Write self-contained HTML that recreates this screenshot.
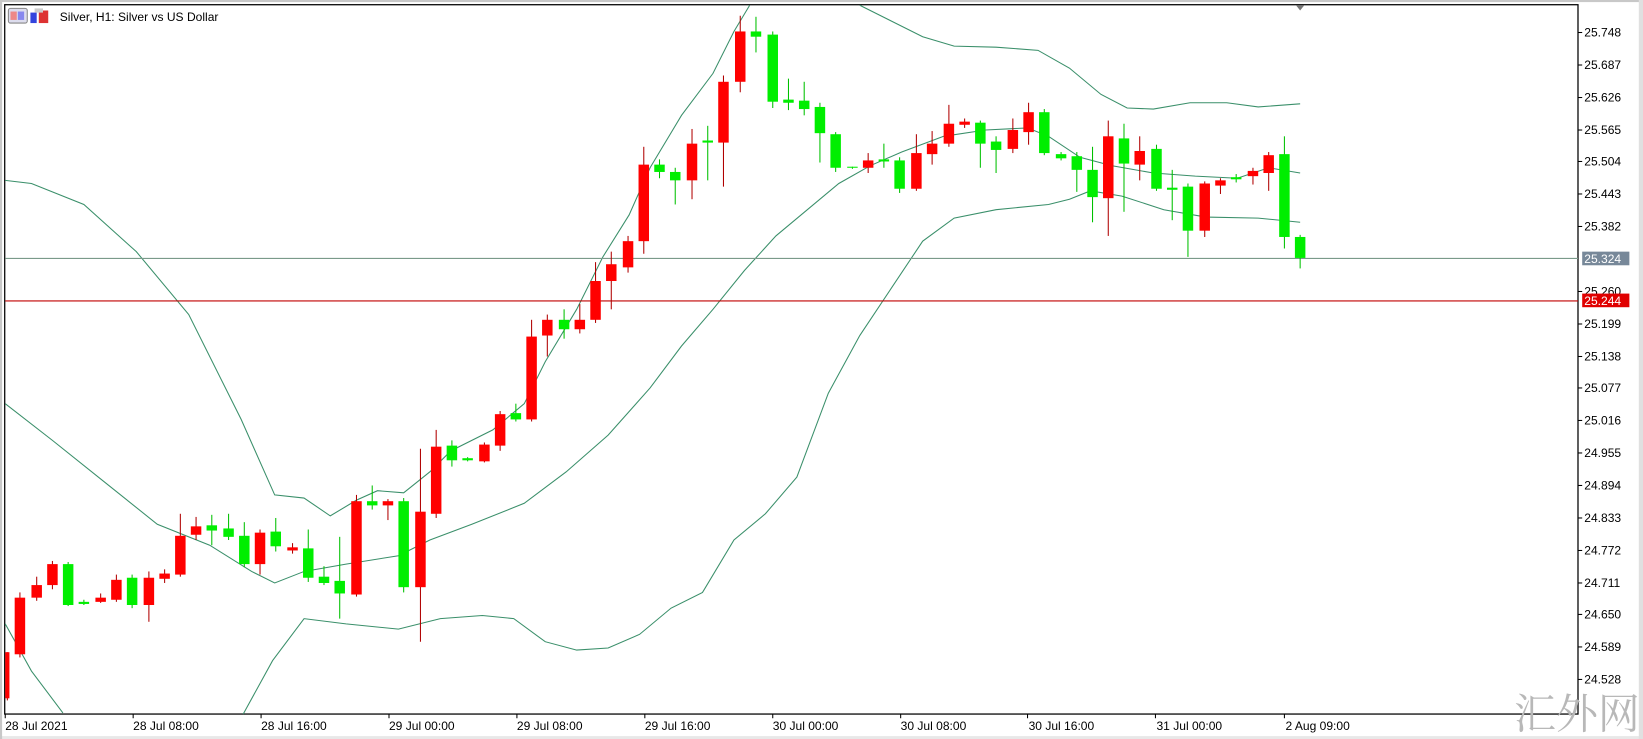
<!DOCTYPE html>
<html><head><meta charset="utf-8"><style>
html,body{margin:0;padding:0;background:#fff;overflow:hidden}
svg{display:block}
text{font-family:"Liberation Sans",sans-serif;font-size:11.5px;fill:#000}
.r rect{fill:#ff0000}.r line{stroke:#b00000}
.g rect{fill:#00ee00}.g line{stroke:#00c000}
line{stroke-width:1}
</style></head><body>
<svg width="1643" height="739" viewBox="0 0 1567 704.8" preserveAspectRatio="none">
<rect x="0" y="0" width="1567" height="704.8" fill="#fff"/>
<rect x="0" y="0" width="1567" height="2" fill="#c8c8c8"/>
<rect x="0" y="702" width="1567" height="3" fill="#e8e8e8"/>
<rect x="1563" y="0" width="4" height="705" fill="#e0e0e0"/>
<rect x="0" y="0" width="2" height="705" fill="#c8c8c8"/>
<rect x="4.5" y="4.5" width="1500.5" height="676.5" fill="none" stroke="#000" stroke-width="1.2"/>
<!-- header icons -->
<rect x="8" y="8" width="18" height="14" rx="2" fill="#dde" stroke="#888"/>
<rect x="10" y="11" width="6" height="8" fill="#e88"/><rect x="17" y="11" width="6" height="8" fill="#88e"/>
<path d="M29 12h6v10h-6z" fill="#3344dd"/><path d="M37 10h9v12h-9z" fill="#dd3333"/><path d="M33 8h8v4h-8z" fill="#ccc"/>
<text x="57" y="20">Silver, H1:  Silver vs US Dollar</text>
<path d="M1236 5 L1244 5 L1240 10 Z" fill="#777"/>
<!-- bands -->
<g fill="none" stroke="#3a8f6a" stroke-width="1">
<polyline points="5,172 30,175 80,195 130,240 180,300 230,400 262,472 290,475 315,492 340,477 360,468 385,470 410,450 430,430 470,410 500,385 520,345 550,295 575,245 600,205 620,160 650,110 680,70 700,30 715,5"/>
<polyline points="820,5 850,20 880,35 910,44 950,45 990,48 1020,65 1050,90 1075,103 1100,104 1135,98 1170,98 1200,102 1240,99"/>
<polyline points="5,385 50,420 100,460 150,500 200,520 240,545 262,556 290,545 330,538 380,530 410,515 450,500 500,480 540,450 580,415 620,370 650,330 680,295 710,258 740,225 770,200 800,175 830,158 860,145 900,130 940,124 980,122 1000,130 1030,150 1060,158 1100,165 1140,168 1180,170 1210,160 1240,165"/>
<polyline points="5,595 30,640 60,680"/>
<polyline points="232,681 260,630 290,590 330,595 380,600 420,590 460,587 490,590 520,612 550,620 580,618 610,605 640,580 670,565 700,515 730,490 760,455 790,375 820,320 850,275 880,230 910,208 950,200 1000,195 1020,190 1040,182 1070,187 1110,200 1150,207 1200,208 1240,212"/>
</g>
<!-- horizontal lines -->
<line x1="5" y1="246.5" x2="1505" y2="246.5" stroke="#7a9a8a"/>
<line x1="5" y1="287" x2="1505" y2="287" stroke="#c00000"/>
<!-- candles -->
<g class="r"><line x1="7" y1="622" x2="7" y2="668"/><rect x="5" y="622" width="4" height="44"/></g>
<g class="r"><line x1="19" y1="565" x2="19" y2="627"/><rect x="14" y="570" width="10" height="54"/></g>
<g class="r"><line x1="35" y1="550" x2="35" y2="573"/><rect x="30" y="558" width="10" height="12"/></g>
<g class="r"><line x1="50" y1="535" x2="50" y2="562"/><rect x="45" y="538" width="10" height="20"/></g>
<g class="g"><line x1="65" y1="536" x2="65" y2="578"/><rect x="60" y="538" width="10" height="39"/></g>
<g class="g"><line x1="80" y1="572" x2="80" y2="577"/><rect x="75" y="574" width="10" height="2"/></g>
<g class="r"><line x1="96" y1="566" x2="96" y2="575"/><rect x="91" y="570" width="10" height="4"/></g>
<g class="r"><line x1="111" y1="548" x2="111" y2="574"/><rect x="106" y="553" width="10" height="19"/></g>
<g class="g"><line x1="126" y1="548" x2="126" y2="580"/><rect x="121" y="551" width="10" height="26"/></g>
<g class="r"><line x1="142" y1="545" x2="142" y2="593"/><rect x="137" y="551" width="10" height="26"/></g>
<g class="r"><line x1="157" y1="543" x2="157" y2="556"/><rect x="152" y="547" width="10" height="5"/></g>
<g class="r"><line x1="172" y1="490" x2="172" y2="550"/><rect x="167" y="511" width="10" height="37"/></g>
<g class="r"><line x1="187" y1="493" x2="187" y2="515"/><rect x="182" y="502" width="10" height="8"/></g>
<g class="g"><line x1="202" y1="491" x2="202" y2="520"/><rect x="197" y="501" width="10" height="5"/></g>
<g class="g"><line x1="218" y1="490" x2="218" y2="515"/><rect x="213" y="504" width="10" height="8"/></g>
<g class="g"><line x1="233" y1="498" x2="233" y2="541"/><rect x="228" y="511" width="10" height="27"/></g>
<g class="r"><line x1="248" y1="505" x2="248" y2="548"/><rect x="243" y="508" width="10" height="30"/></g>
<g class="g"><line x1="263" y1="494" x2="263" y2="526"/><rect x="258" y="507" width="10" height="14"/></g>
<g class="r"><line x1="279" y1="518" x2="279" y2="528"/><rect x="274" y="522" width="10" height="3"/></g>
<g class="g"><line x1="294" y1="505" x2="294" y2="555"/><rect x="289" y="523" width="10" height="28"/></g>
<g class="g"><line x1="309" y1="540" x2="309" y2="558"/><rect x="304" y="550" width="10" height="6"/></g>
<g class="g"><line x1="324" y1="512" x2="324" y2="590"/><rect x="319" y="554" width="10" height="12"/></g>
<g class="r"><line x1="340" y1="472" x2="340" y2="569"/><rect x="335" y="478" width="10" height="89"/></g>
<g class="g"><line x1="355" y1="463" x2="355" y2="486"/><rect x="350" y="478" width="10" height="4"/></g>
<g class="r"><line x1="370" y1="476" x2="370" y2="496"/><rect x="365" y="478" width="10" height="4"/></g>
<g class="g"><line x1="385" y1="475" x2="385" y2="565"/><rect x="380" y="478" width="10" height="82"/></g>
<g class="r"><line x1="401" y1="428" x2="401" y2="612"/><rect x="396" y="488" width="10" height="72"/></g>
<g class="r"><line x1="416" y1="410" x2="416" y2="494"/><rect x="411" y="426" width="10" height="64"/></g>
<g class="g"><line x1="431" y1="420" x2="431" y2="445"/><rect x="426" y="425" width="10" height="14"/></g>
<g class="g"><line x1="446" y1="436" x2="446" y2="440"/><rect x="441" y="437" width="10" height="2"/></g>
<g class="r"><line x1="462" y1="422" x2="462" y2="441"/><rect x="457" y="424" width="10" height="16"/></g>
<g class="r"><line x1="477" y1="392" x2="477" y2="430"/><rect x="472" y="395" width="10" height="30"/></g>
<g class="g"><line x1="492" y1="385" x2="492" y2="402"/><rect x="487" y="394" width="10" height="6"/></g>
<g class="r"><line x1="507" y1="305" x2="507" y2="402"/><rect x="502" y="321" width="10" height="79"/></g>
<g class="r"><line x1="522" y1="300" x2="522" y2="340"/><rect x="517" y="305" width="10" height="15"/></g>
<g class="g"><line x1="538" y1="295" x2="538" y2="323"/><rect x="533" y="305" width="10" height="9"/></g>
<g class="r"><line x1="553" y1="290" x2="553" y2="318"/><rect x="548" y="305" width="10" height="9"/></g>
<g class="r"><line x1="568" y1="250" x2="568" y2="308"/><rect x="563" y="268" width="10" height="37"/></g>
<g class="r"><line x1="583" y1="240" x2="583" y2="295"/><rect x="578" y="252" width="10" height="16"/></g>
<g class="r"><line x1="599" y1="225" x2="599" y2="260"/><rect x="594" y="230" width="10" height="25"/></g>
<g class="r"><line x1="614" y1="140" x2="614" y2="242"/><rect x="609" y="157" width="10" height="73"/></g>
<g class="g"><line x1="629" y1="152" x2="629" y2="170"/><rect x="624" y="157" width="10" height="7"/></g>
<g class="g"><line x1="644" y1="160" x2="644" y2="195"/><rect x="639" y="164" width="10" height="8"/></g>
<g class="r"><line x1="660" y1="123" x2="660" y2="190"/><rect x="655" y="137" width="10" height="35"/></g>
<g class="g"><line x1="675" y1="120" x2="675" y2="172"/><rect x="670" y="134" width="10" height="2"/></g>
<g class="r"><line x1="690" y1="72" x2="690" y2="178"/><rect x="685" y="78" width="10" height="58"/></g>
<g class="r"><line x1="706" y1="15" x2="706" y2="88"/><rect x="701" y="30" width="10" height="48"/></g>
<g class="g"><line x1="721" y1="16" x2="721" y2="50"/><rect x="716" y="30" width="10" height="5"/></g>
<g class="g"><line x1="737" y1="30" x2="737" y2="103"/><rect x="732" y="33" width="10" height="64"/></g>
<g class="g"><line x1="752" y1="75" x2="752" y2="105"/><rect x="747" y="95" width="10" height="3"/></g>
<g class="g"><line x1="767" y1="78" x2="767" y2="110"/><rect x="762" y="96" width="10" height="8"/></g>
<g class="g"><line x1="782" y1="98" x2="782" y2="155"/><rect x="777" y="102" width="10" height="25"/></g>
<g class="g"><line x1="797" y1="126" x2="797" y2="164"/><rect x="792" y="128" width="10" height="32"/></g>
<g class="g"><line x1="813" y1="159" x2="813" y2="161"/><rect x="808" y="159" width="10" height="1"/></g>
<g class="r"><line x1="828" y1="146" x2="828" y2="165"/><rect x="823" y="153" width="10" height="7"/></g>
<g class="g"><line x1="843" y1="137" x2="843" y2="160"/><rect x="838" y="152" width="10" height="2"/></g>
<g class="g"><line x1="858" y1="150" x2="858" y2="184"/><rect x="853" y="153" width="10" height="27"/></g>
<g class="r"><line x1="874" y1="128" x2="874" y2="182"/><rect x="869" y="146" width="10" height="34"/></g>
<g class="r"><line x1="889" y1="125" x2="889" y2="157"/><rect x="884" y="137" width="10" height="10"/></g>
<g class="r"><line x1="905" y1="100" x2="905" y2="140"/><rect x="900" y="118" width="10" height="19"/></g>
<g class="r"><line x1="920" y1="113" x2="920" y2="122"/><rect x="915" y="116" width="10" height="3"/></g>
<g class="g"><line x1="935" y1="115" x2="935" y2="160"/><rect x="930" y="117" width="10" height="20"/></g>
<g class="g"><line x1="950" y1="130" x2="950" y2="165"/><rect x="945" y="135" width="10" height="8"/></g>
<g class="r"><line x1="966" y1="113" x2="966" y2="146"/><rect x="961" y="124" width="10" height="18"/></g>
<g class="r"><line x1="981" y1="98" x2="981" y2="138"/><rect x="976" y="107" width="10" height="19"/></g>
<g class="g"><line x1="996" y1="104" x2="996" y2="148"/><rect x="991" y="107" width="10" height="39"/></g>
<g class="g"><line x1="1012" y1="145" x2="1012" y2="153"/><rect x="1007" y="147" width="10" height="4"/></g>
<g class="g"><line x1="1027" y1="145" x2="1027" y2="183"/><rect x="1022" y="149" width="10" height="13"/></g>
<g class="g"><line x1="1042" y1="140" x2="1042" y2="212"/><rect x="1037" y="162" width="10" height="26"/></g>
<g class="r"><line x1="1057" y1="115" x2="1057" y2="225"/><rect x="1052" y="130" width="10" height="59"/></g>
<g class="g"><line x1="1072" y1="118" x2="1072" y2="202"/><rect x="1067" y="132" width="10" height="24"/></g>
<g class="r"><line x1="1087" y1="130" x2="1087" y2="172"/><rect x="1082" y="144" width="10" height="13"/></g>
<g class="g"><line x1="1103" y1="138" x2="1103" y2="182"/><rect x="1098" y="142" width="10" height="38"/></g>
<g class="g"><line x1="1118" y1="162" x2="1118" y2="210"/><rect x="1113" y="179" width="10" height="2"/></g>
<g class="g"><line x1="1133" y1="175" x2="1133" y2="245"/><rect x="1128" y="178" width="10" height="42"/></g>
<g class="r"><line x1="1149" y1="173" x2="1149" y2="226"/><rect x="1144" y="175" width="10" height="45"/></g>
<g class="r"><line x1="1164" y1="170" x2="1164" y2="185"/><rect x="1159" y="172" width="10" height="5"/></g>
<g class="g"><line x1="1179" y1="166" x2="1179" y2="174"/><rect x="1174" y="169" width="10" height="2"/></g>
<g class="r"><line x1="1195" y1="160" x2="1195" y2="176"/><rect x="1190" y="163" width="10" height="5"/></g>
<g class="r"><line x1="1210" y1="145" x2="1210" y2="182"/><rect x="1205" y="148" width="10" height="17"/></g>
<g class="g"><line x1="1225" y1="130" x2="1225" y2="237"/><rect x="1220" y="147" width="10" height="79"/></g>
<g class="g"><line x1="1240" y1="224" x2="1240" y2="256"/><rect x="1235" y="226" width="10" height="20"/></g>
<!-- price axis -->
<g stroke="#000">
<line x1="1505" y1="31" x2="1509" y2="31"/><line x1="1505" y1="62" x2="1509" y2="62"/><line x1="1505" y1="93" x2="1509" y2="93"/><line x1="1505" y1="124" x2="1509" y2="124"/><line x1="1505" y1="154" x2="1509" y2="154"/><line x1="1505" y1="185" x2="1509" y2="185"/><line x1="1505" y1="216" x2="1509" y2="216"/><line x1="1505" y1="278" x2="1509" y2="278"/><line x1="1505" y1="309" x2="1509" y2="309"/><line x1="1505" y1="340" x2="1509" y2="340"/><line x1="1505" y1="370" x2="1509" y2="370"/><line x1="1505" y1="401" x2="1509" y2="401"/><line x1="1505" y1="432" x2="1509" y2="432"/><line x1="1505" y1="463" x2="1509" y2="463"/><line x1="1505" y1="494" x2="1509" y2="494"/><line x1="1505" y1="525" x2="1509" y2="525"/><line x1="1505" y1="556" x2="1509" y2="556"/><line x1="1505" y1="586" x2="1509" y2="586"/><line x1="1505" y1="617" x2="1509" y2="617"/><line x1="1505" y1="648" x2="1509" y2="648"/>
</g>
<g>
<text x="1511" y="35">25.748</text><text x="1511" y="66">25.687</text><text x="1511" y="97">25.626</text><text x="1511" y="128">25.565</text><text x="1511" y="158">25.504</text><text x="1511" y="189">25.443</text><text x="1511" y="220">25.382</text><text x="1511" y="282">25.260</text><text x="1511" y="313">25.199</text><text x="1511" y="344">25.138</text><text x="1511" y="374">25.077</text><text x="1511" y="405">25.016</text><text x="1511" y="436">24.955</text><text x="1511" y="467">24.894</text><text x="1511" y="498">24.833</text><text x="1511" y="529">24.772</text><text x="1511" y="560">24.711</text><text x="1511" y="590">24.650</text><text x="1511" y="621">24.589</text><text x="1511" y="652">24.528</text>
</g>
<rect x="1509" y="240" width="45" height="13" fill="#778899"/><text x="1511" y="251" style="fill:#fff">25.324</text>
<rect x="1509" y="280" width="45" height="13" fill="#e00000"/><text x="1511" y="291" style="fill:#fff">25.244</text>
<!-- time axis -->
<g stroke="#000">
<line x1="5" y1="681" x2="5" y2="685"/><line x1="127" y1="681" x2="127" y2="685"/><line x1="249" y1="681" x2="249" y2="685"/><line x1="371" y1="681" x2="371" y2="685"/><line x1="493" y1="681" x2="493" y2="685"/><line x1="615" y1="681" x2="615" y2="685"/><line x1="737" y1="681" x2="737" y2="685"/><line x1="859" y1="681" x2="859" y2="685"/><line x1="980" y1="681" x2="980" y2="685"/><line x1="1102" y1="681" x2="1102" y2="685"/><line x1="1225" y1="681" x2="1225" y2="685"/>
</g>
<g>
<text x="5" y="696">28 Jul 2021</text><text x="127" y="696">28 Jul 08:00</text><text x="249" y="696">28 Jul 16:00</text><text x="371" y="696">29 Jul 00:00</text><text x="493" y="696">29 Jul 08:00</text><text x="615" y="696">29 Jul 16:00</text><text x="737" y="696">30 Jul 00:00</text><text x="859" y="696">30 Jul 08:00</text><text x="981" y="696">30 Jul 16:00</text><text x="1103" y="696">31 Jul 00:00</text><text x="1226" y="696">2 Aug 09:00</text>
</g>
<text x="1444" y="695" style="font-family:'Noto Serif CJK SC','Noto Sans CJK SC',serif;font-size:40px;fill:#b8b8b8">汇外网</text>
</svg>
</body></html>
